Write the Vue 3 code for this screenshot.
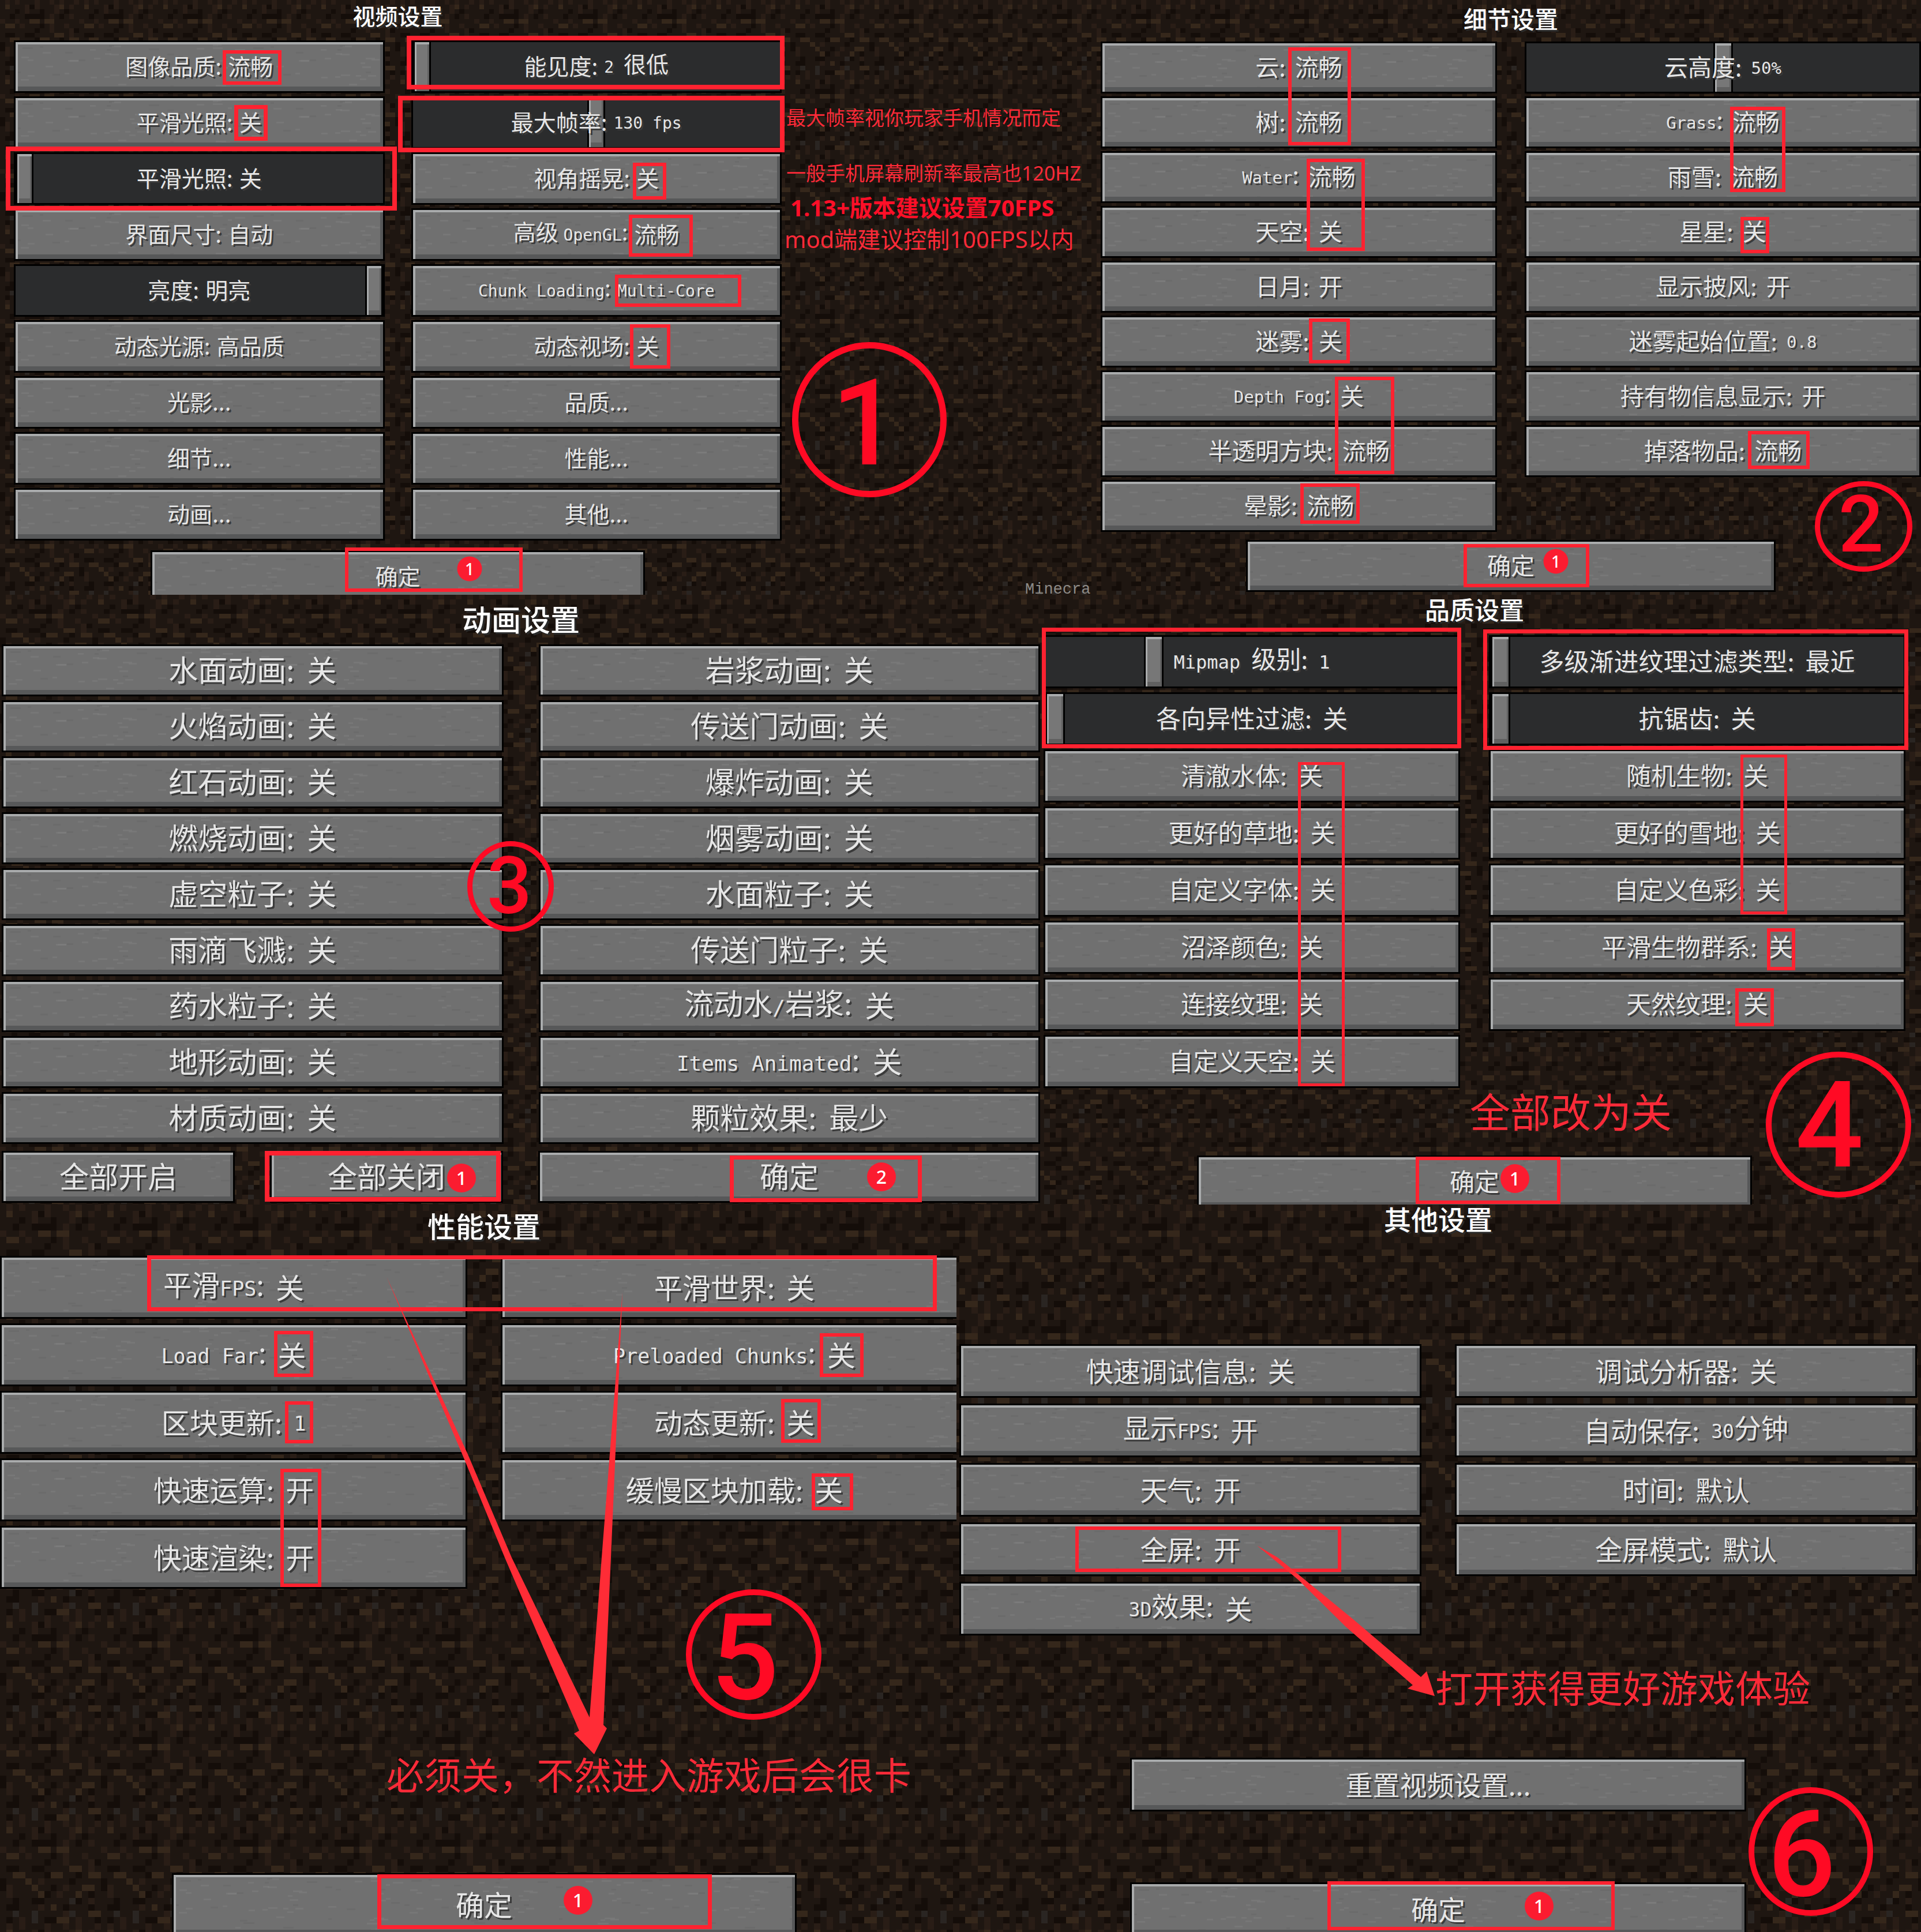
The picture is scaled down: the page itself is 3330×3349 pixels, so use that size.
<script setup>
const DESIGN_W = 3330
const DESIGN_H = 3349

const panels = [
  {
    key: 'video', title: '视频设置',
    left: ['图像品质:|流畅', '平滑光照:|关', { t: '平滑光照:|关', v: 0 }, '界面尺寸:|自动', { t: '亮度:|明亮', v: 100 }, '动态光源:|高品质', '光影...', '细节...', '动画...'],
    right: [{ t: '能见度:|2 很低', v: 0 }, { t: '最大帧率:|130 fps', v: 50 }, '视角摇晃:|关', '高级 OpenGL:|流畅', 'Chunk Loading:|Multi-Core', '动态视场:|关', '品质...', '性能...', '其他...'],
    foot: ['确定'],
  },
  {
    key: 'detail', title: '细节设置',
    left: ['云:|流畅', '树:|流畅', 'Water:|流畅', '天空:|关', '日月:|开', '迷雾:|关', 'Depth Fog:|关', '半透明方块:|流畅', '晕影:|流畅'],
    right: [{ t: '云高度:|50%', v: 50 }, 'Grass:|流畅', '雨雪:|流畅', '星星:|关', '显示披风:|开', '迷雾起始位置:|0.8', '持有物信息显示:|开', '掉落物品:|流畅'],
    foot: ['确定'],
  },
  {
    key: 'anim', title: '动画设置',
    left: ['水面动画:|关', '火焰动画:|关', '红石动画:|关', '燃烧动画:|关', '虚空粒子:|关', '雨滴飞溅:|关', '药水粒子:|关', '地形动画:|关', '材质动画:|关'],
    right: ['岩浆动画:|关', '传送门动画:|关', '爆炸动画:|关', '烟雾动画:|关', '水面粒子:|关', '传送门粒子:|关', '流动水/岩浆:|关', 'Items Animated:|关', '颗粒效果:|最少'],
    foot: ['全部开启', '全部关闭', '确定'],
  },
  {
    key: 'quality', title: '品质设置',
    left: [{ t: 'Mipmap 级别:|1', v: 25 }, { t: '各向异性过滤:|关', v: 0 }, '清澈水体:|关', '更好的草地:|关', '自定义字体:|关', '沼泽颜色:|关', '连接纹理:|关', '自定义天空:|关'],
    right: [{ t: '多级渐进纹理过滤类型:|最近', v: 0 }, { t: '抗锯齿:|关', v: 0 }, '随机生物:|关', '更好的雪地:|关', '自定义色彩:|关', '平滑生物群系:|关', '天然纹理:|关'],
    foot: ['确定'],
  },
  {
    key: 'perf', title: '性能设置',
    left: ['平滑FPS:|关', 'Load Far:|关', '区块更新:|1', '快速运算:|开', '快速渲染:|开'],
    right: ['平滑世界:|关', 'Preloaded Chunks:|关', '动态更新:|关', '缓慢区块加载:|关'],
    foot: ['确定'],
  },
  {
    key: 'other', title: '其他设置',
    left: ['快速调试信息:|关', '显示FPS:|开', '天气:|开', '全屏:|开', '3D效果:|关'],
    right: ['调试分析器:|关', '自动保存:|30分钟', '时间:|默认', '全屏模式:|默认'],
    foot: ['重置视频设置...', '确定'],
  },
]

// Splits a caption into halves (name, value) and each half into Latin and Han runs.
function runs(text) {
  return text.split('|').map((half) =>
    (half.match(/[A-Za-z0-9%/][A-Za-z0-9%/. -]*|[^A-Za-z0-9%/]+/g) || []).map((s) => ({
      s,
      latin: /^[A-Za-z0-9%/]/.test(s),
    })),
  )
}
const toItem = (o) => (typeof o === 'string' ? { halves: runs(o), name: o } : { halves: runs(o.t), name: o.t, v: o.v })
const built = panels.map((p) => ({
  ...p,
  cols: [p.left.map(toItem), p.right.map(toItem)],
}))
const rows = [built.slice(0, 2), built.slice(2, 4), built.slice(4, 6)]

// Highlight boxes: x1, y1, x2, y2, stroke
const boxes = [
  [386, 87, 488, 147, 6], [406, 182, 464, 244, 7], [10, 254, 688, 365, 8], [705, 62, 1360, 155, 8],
  [690, 166, 1360, 264, 8], [1097, 282, 1155, 346, 6], [1090, 372, 1201, 445, 6], [1066, 476, 1285, 532, 6],
  [1092, 562, 1162, 639, 6], [598, 949, 906, 1026, 6],
  [2233, 82, 2342, 252, 6], [2265, 275, 2366, 435, 6], [2999, 185, 3095, 333, 6], [3017, 376, 3067, 439, 6],
  [2269, 552, 2340, 630, 6], [2314, 653, 2417, 822, 6], [3030, 747, 3137, 813, 6], [2254, 838, 2357, 908, 6],
  [2537, 943, 2755, 1018, 6],
  [459, 1995, 868, 2083, 8], [1265, 2003, 1598, 2084, 7],
  [1806, 1088, 2533, 1297, 7], [2571, 1091, 3308, 1300, 7], [2250, 1321, 2331, 1883, 5], [3017, 1308, 3098, 1585, 5],
  [3063, 1609, 3112, 1682, 6], [3008, 1713, 3075, 1779, 6], [2454, 2005, 2705, 2087, 6],
  [255, 2176, 1624, 2273, 7], [475, 2307, 543, 2387, 6], [1421, 2311, 1497, 2387, 6], [494, 2429, 543, 2502, 6],
  [1354, 2425, 1423, 2501, 6], [486, 2546, 557, 2751, 6], [1407, 2554, 1479, 2618, 6], [654, 3249, 1234, 3344, 7],
  [1864, 2646, 2325, 2725, 6], [2301, 3261, 2799, 3346, 6],
]

// Step rings: x1, y1, x2, y2, stroke
const rings = [
  [1373, 593, 1641, 862, 11], [3146, 834, 3315, 991, 9], [810, 1458, 960, 1615, 9],
  [3061, 1823, 3313, 2076, 10], [1189, 2755, 1424, 2981, 10], [3031, 3098, 3247, 3321, 10],
]

// Ring numerals: centre x, centre y, size class
const numerals = [
  ['1', 1500, 734, 'big'], ['2', 3226, 909, 'small'], ['3', 883, 1536, 'small'],
  ['4', 3171, 1951, 'big'], ['5', 1291, 2874, 'big'], ['6', 3123, 3215, 'big'],
]

const badges = [
  ['1', 814, 986], ['1', 2697, 973], ['1', 800, 2042], ['2', 1528, 2040],
  ['1', 2626, 2043], ['1', 1002, 3294], ['1', 2668, 3304],
]

// Handwritten notes: left x, centre y, style class
const notes = [
  ['最大帧率视你玩家手机情况而定', 1363, 204, 'n34'],
  ['一般手机屏幕刷新率最高也120HZ', 1363, 300, 'n34'],
  ['1.13+版本建议设置70FPS', 1370, 360, 'n40 strong'],
  ['mod端建议控制100FPS以内', 1360, 415, 'n40'],
  ['全部改为关', 2548, 1928, 'n70'],
  ['必须关，不然进入游戏后会很卡', 670, 3077, 'n65'],
  ['打开获得更好游戏体验', 2488, 2926, 'n65'],
]

const at = (x, y) => ({ left: (x / DESIGN_W) * 100 + '%', top: (y / DESIGN_H) * 100 + '%' })

// 16 x 16 dirt tile
const dirtMap = [
  'bmbmbbbmbbmbmbbm', 'blbbbmdmbbbmlbmb', 'bbbdbmbbdbbmbdbb', 'bbdbbddddbmbdbmb',
  'mbbmbbllbllbbbbb', 'bllbmbbbdbmbbmbb', 'bbbbbbbdbbmbbbmd', 'bddbbddbbbbllbmb',
  'bbllbbbdllbbdbll', 'dbbblbmbbbbdbbbb', 'dmbbblbbdbmbbllb', 'bmbbbbldbmbblbdb',
  'bbdbbddbbbbgdbmb', 'bddbbbmblbdbbbdb', 'bbgbbgbbbbmgbbll', 'bdbmbgbddllbmbbd',
]
const dirtColor = { d: '#140d09', m: '#291d16', l: '#35271b', g: '#2a2522' }
let dirtRects = ''
dirtMap.forEach((line, y) =>
  [...line].forEach((c, x) => {
    if (dirtColor[c]) dirtRects += `<rect x="${x}" y="${y}" width="1" height="1" fill="${dirtColor[c]}"/>`
  }),
)
const svgUrl = (s) => `url("data:image/svg+xml,${encodeURIComponent(s)}")`
const dirt = svgUrl(
  `<svg xmlns="http://www.w3.org/2000/svg" viewBox="0 0 16 16" width="16" height="16" preserveAspectRatio="none" shape-rendering="crispEdges"><rect width="16" height="16" fill="#1e1611"/>${dirtRects}</svg>`,
)

// Faint specks on the stone buttons
let seed = 7
const rnd = () => (seed = (seed * 16807) % 2147483647) / 2147483647
let specks = ''
for (let i = 0; i < 60; i++) {
  const c = rnd() > 0.5 ? '#828282' : '#626262'
  specks += `<rect x="${Math.floor(rnd() * 390)}" y="${Math.floor(rnd() * 84)}" width="${6 + Math.floor(rnd() * 14)}" height="3" fill="${c}" opacity="0.35"/>`
}
const stone = svgUrl(
  `<svg xmlns="http://www.w3.org/2000/svg" width="400" height="90"><rect width="400" height="90" fill="#707070"/>${specks}</svg>`,
)
</script>

<template>
  <main class="page" :style="{ '--dirt': dirt, '--stone': stone }">
    <div v-for="(row, r) in rows" :key="r" class="row" :class="'row' + r">
      <section v-for="p in row" :key="p.key" class="panel" :class="p.key">
        <h2 class="title">{{ p.title }}</h2>
        <div class="columns">
          <div v-for="(col, c) in p.cols" :key="c" class="column">
            <template v-for="item in col" :key="item.name + (item.v ?? '')">
              <label v-if="item.v !== undefined" class="slider">
                <input type="range" min="0" max="100" :value="item.v" />
                <span class="caption">
                  <span v-for="(h, i) in item.halves" :key="i"><span v-for="(u, j) in h" :key="j" :class="{ latin: u.latin }">{{ u.s }}</span></span>
                </span>
              </label>
              <button v-else type="button" class="stone">
                <span class="caption">
                  <span v-for="(h, i) in item.halves" :key="i"><span v-for="(u, j) in h" :key="j" :class="{ latin: u.latin }">{{ u.s }}</span></span>
                </span>
              </button>
            </template>
          </div>
        </div>
        <div class="foot">
          <button v-for="f in p.foot" :key="f" type="button" class="stone"><span class="caption">{{ f }}</span></button>
        </div>
      </section>
    </div>

    <div class="marks">
      <svg class="ink" :viewBox="`0 0 ${DESIGN_W} ${DESIGN_H}`" preserveAspectRatio="none" aria-hidden="true">
        <g fill="none" stroke="#ff2230">
          <rect v-for="(b, i) in boxes" :key="i" :x="b[0] + b[4] / 2" :y="b[1] + b[4] / 2" :width="b[2] - b[0] - b[4]" :height="b[3] - b[1] - b[4]" :stroke-width="b[4]" />
        </g>
        <g fill="none" stroke="#ff0a24">
          <ellipse v-for="(e, i) in rings" :key="i" :cx="(e[0] + e[2]) / 2" :cy="(e[1] + e[3]) / 2" :rx="(e[2] - e[0] - e[4]) / 2" :ry="(e[3] - e[1] - e[4]) / 2" :stroke-width="e[4]" />
        </g>
        <g fill="#ff2c36">
          <path d="M670 2213L811 2521L887 2700L1022 2977L1043 2700L1079 2240L1059 2700L1046 2990L1052 2996L1030 3041L995 3005L1004 3000L875 2700L803 2525Z" />
          <path d="M2179 2679L2215 2700L2347 2808L2463 2907L2473 2897L2487 2940L2440 2927L2449 2921L2333 2820L2250 2738Z" />
        </g>
      </svg>
      <span v-for="n in numerals" :key="n[0]" class="numeral" :class="n[3]" :style="at(n[1], n[2])">{{ n[0] }}</span>
      <span v-for="(b, i) in badges" :key="i" class="badge" :class="{ compact: i < 2 }" :style="at(b[1], b[2])">{{ b[0] }}</span>
      <p v-for="n in notes" :key="n[0]" class="note" :class="n[3]" :style="at(n[1], n[2])">{{ n[0] }}</p>
      <span class="watermark" :style="at(1777, 1022)">Minecra</span>
    </div>
  </main>
</template>

<style>
body {
  margin: 0;
  background: #1d1510;
}
</style>

<style scoped>
.page {
  position: relative;
  overflow: hidden;
  font-family: "Noto Sans CJK SC", "Noto Sans", sans-serif;
  color: #e6e6e6;
}
.row {
  position: relative;
  display: grid;
  background-image: var(--dirt);
}
.row0 { grid-template-columns: 1890fr 1440fr; background-size: 137px 130px; }
.row1 { grid-template-columns: 1806fr 1524fr; background-size: 160px 132px; }
.row2 { grid-template-columns: 1658fr 1672fr; background-size: 175px 178px; }

.panel {
  min-width: 0;
  box-sizing: border-box;
}
.video { --fs: 39px; --lat: 28px; --gap: 11px; --h: 91px; --rg: 6px; --cg: 46px; --thumb: 31px; padding: 0 535px 0 24px; }
.detail { --fs: 41px; --lat: 29px; --gap: 16px; --h: 90px; --rg: 5px; --cg: 48px; --thumb: 34px; padding: 0 0 0 18px; }
.anim { --fs: 51px; --lat: 36px; --gap: 22px; --h: 90px; --rg: 7px; --cg: 61px; padding: 0 3px; }
.quality { --fs: 43px; --lat: 32px; --gap: 19px; --h: 92px; --rg: 7px; --cg: 50px; --thumb: 34px; padding: 0 27px 0 3px; }
.perf { --fs: 49px; --lat: 35px; --gap: 20px; --h: 109px; --rg: 8px; --cg: 58px; overflow: hidden; }
.other { --fs: 47px; --lat: 33px; --gap: 20px; --h: 93px; --rg: 10px; --cg: 58px; padding: 0 7px 0 5px; }

.title {
  margin: 0;
  text-align: center;
  font-size: var(--fs);
  font-weight: 500;
  color: #fff;
  text-shadow: 3px 3px 0 #2a2a2a;
}
.video .title { line-height: 52px; margin-bottom: 18px; }
.detail .title { line-height: 62px; margin-bottom: 10px; }
.anim .title { line-height: 82px; margin-bottom: 4px; }
.quality .title { line-height: 48px; margin-bottom: 22px; }
.perf .title { line-height: 72px; margin-bottom: 17px; }
.other .title { line-height: 48px; margin-bottom: 194px; }

.columns {
  display: grid;
  grid-template-columns: 1fr 1fr;
  column-gap: var(--cg);
}
.perf .title,
.perf .columns,
.perf .foot { margin-right: -20px; }

.column {
  display: grid;
  grid-auto-rows: var(--h);
  row-gap: var(--rg);
  align-content: start;
}

.stone {
  display: flex;
  align-items: center;
  justify-content: center;
  box-sizing: border-box;
  width: 100%;
  height: var(--h);
  margin: 0;
  padding: 0;
  border: 3px solid #000;
  background: #707070 var(--stone);
  box-shadow: inset 4px 4px 0 #a9abac, inset -5px -8px 0 #575859;
  font-family: inherit;
  color: inherit;
}

.caption {
  display: flex;
  gap: var(--gap);
  align-items: center;
  justify-content: center;
  padding-bottom: 5px;
  font-size: var(--fs);
  line-height: var(--fs);
  white-space: pre;
  text-shadow: 3px 3px 0 #3a3a3a;
}
.latin {
  font-family: "DejaVu Sans Mono", "Liberation Mono", monospace;
  font-size: var(--lat);
}

.slider {
  display: grid;
  box-sizing: border-box;
  height: var(--h);
  border: 3px solid #000;
  background: #2b2c2d;
}
.slider input,
.slider .caption {
  grid-area: 1 / 1;
}
.slider .caption {
  z-index: 1;
  pointer-events: none;
}
.slider input {
  appearance: none;
  width: 100%;
  height: 100%;
  margin: 0;
  background: transparent;
}
.slider input::-webkit-slider-runnable-track {
  height: 100%;
}
.slider input::-webkit-slider-thumb {
  appearance: none;
  box-sizing: border-box;
  width: var(--thumb);
  height: 100%;
  border: 0 solid #000;
  border-width: 0 3px;
  border-radius: 0;
  background: #777;
  box-shadow: inset 3px 4px 0 #a9abac, inset -3px -8px 0 #606060;
}

.foot {
  display: flex;
  flex-direction: column;
  align-items: center;
}
.video .foot { margin: 17px 0 -14px; }
.video .foot .stone { width: 857px; }
.detail .foot { margin: 14px 0 5px; }
.detail .foot .stone { width: 918px; }
.quality .foot { margin: 117px 0 -7px; }
.quality .foot .stone { width: 962px; }
.perf .foot { margin-top: 493px; margin-bottom: -7px; }
.perf .foot .stone { width: 1083px; }
.other .foot { margin: 212px 0 -7px; gap: 123px; }
.other .foot .stone { width: 1068px; }
.anim .foot {
  display: grid;
  grid-template-columns: 404fr 404fr 870fr;
  column-gap: var(--cg);
  margin: 12px 0 3px;
}

.marks {
  position: absolute;
  inset: 0;
  pointer-events: none;
}
.ink {
  display: block;
  width: 100%;
  height: 100%;
}
.numeral,
.badge,
.note,
.watermark {
  position: absolute;
  margin: 0;
  line-height: 1;
  white-space: nowrap;
}
.numeral {
  transform: translate(-50%, -50%);
  font-family: Roboto, "Open Sans", sans-serif;
  font-weight: 500;
  color: #ff0a24;
}
.numeral.big { font-size: 208px; }
.numeral.small { font-size: 138px; }
.badge {
  width: 50px;
  transform: translate(-50%, -50%);
  border-radius: 50%;
  background: #fb1c30;
  color: #fff;
  font-family: "Noto Sans", sans-serif;
  font-size: 32px;
  font-weight: 500;
  line-height: 50px;
  text-align: center;
}
.badge.compact {
  width: 43px;
  font-size: 28px;
  line-height: 43px;
}
.note {
  transform: translateY(-50%);
  font-family: "Noto Sans", "Noto Sans CJK SC", sans-serif;
  color: #fb2a38;
}
.n34 { font-size: 34px; }
.n40 { font-size: 40px; }
.n65 { font-size: 65px; }
.n70 { font-size: 70px; }
.strong {
  font-weight: 700;
  color: #ff0f28;
}
.watermark {
  transform: translateY(-50%);
  font-family: "Liberation Mono", monospace;
  font-size: 27px;
  color: #8d8a86;
}
</style>
